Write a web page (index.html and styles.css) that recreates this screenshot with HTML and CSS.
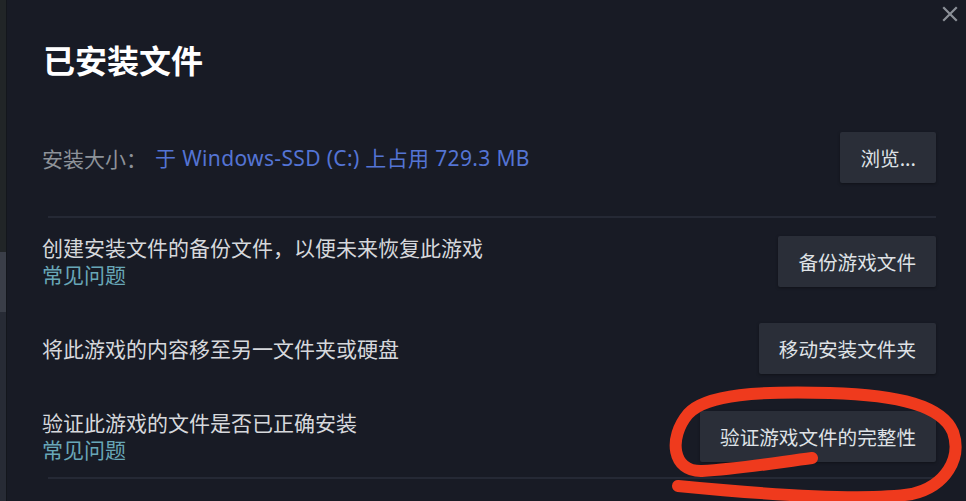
FILE: index.html
```html
<!DOCTYPE html>
<html lang="zh-CN">
<head>
<meta charset="utf-8">
<title>已安装文件</title>
<link rel="stylesheet" href="styles.css">
</head>
<body>
<div class="strip"><div class="s1"></div><div class="s2"></div><div class="s3"></div></div>
<main class="dialog">
  <h1 class="title">已安装文件</h1>
  <section class="row row-size">
    <div class="size"><span class="label">安装大小：</span><span class="value">于 Windows-SSD (C:) 上占用 729.3 MB</span></div>
    <button class="btn">浏览...</button>
  </section>
  <hr class="divider">
  <section class="row">
    <div class="desc"><div>创建安装文件的备份文件，以便未来恢复此游戏</div><a class="link">常见问题</a></div>
    <button class="btn">备份游戏文件</button>
  </section>
  <section class="row gap">
    <div class="desc"><div>将此游戏的内容移至另一文件夹或硬盘</div></div>
    <button class="btn">移动安装文件夹</button>
  </section>
  <section class="row gap">
    <div class="desc"><div>验证此游戏的文件是否已正确安装</div><a class="link">常见问题</a></div>
    <button class="btn">验证游戏文件的完整性</button>
  </section>
  <hr class="divider bottom">
</main>
<button class="close" aria-label="关闭">
  <svg width="16" height="16" viewBox="0 0 16 16"><path d="M2 2 L14 14 M14 2 L2 14" stroke="#8b9097" stroke-width="2.2" stroke-linecap="square" fill="none"/></svg>
</button>
<svg class="scribble" width="966" height="501" viewBox="0 0 966 501">
  <path d="M812 458 C780 462 740 469 702 471 C672 472 668 438 688 414 C706 394 760 391 830 393 C900 395 942 406 953 432 C962 458 946 486 912 494 C862 502 760 494 678 486" fill="none" stroke="#ef3a1d" stroke-width="12" stroke-linecap="round" stroke-linejoin="round"/>
</svg>
</body>
</html>
```
FILE: styles.css
```css
html, body {
  margin: 0;
  height: 501px;
  overflow: hidden;
}
body {
  position: relative;
  display: flex;
  background: #181b25;
  font-family: "Noto Sans", "Noto Sans CJK SC", sans-serif;
  color: #d8dadd;
}
.strip {
  width: 6px;
  display: flex;
  flex-direction: column;
  border-right: 1px solid #13161c;
}
.s1 { height: 252px; background: #212527; }
.s2 { height: 60px; background: #3a3e48; }
.s3 { flex: 1; background: #272b35; }
.dialog {
  flex: 1;
  padding: 43px 30px 0 35px;
}
.title {
  margin: 0;
  padding-left: 1px;
  font-size: 32px;
  line-height: 32px;
  font-weight: 700;
  color: #ffffff;
  font-family: "Noto Sans CJK SC", sans-serif;
}
.row {
  display: flex;
  align-items: center;
  justify-content: space-between;
}
.row-size { margin-top: 57px; }
.gap { margin-top: 35px; }
.size {
  font-size: 21px;
  line-height: 27px;
  display: flex;
  padding-top: 2px;
}
.label {
  color: #8d9299;
  font-family: "Noto Sans CJK SC", sans-serif;
  margin-right: 8px;
}
.value {
  color: #5474d4;
  letter-spacing: 0.35px;
}
.desc {
  font-size: 21px;
  line-height: 27px;
  font-family: "Noto Sans CJK SC", sans-serif;
  color: #d6d8dc;
}
.link {
  display: block;
  color: #68a7b8;
}
.btn {
  height: 51px;
  padding: 0 20px;
  border: none;
  border-radius: 2px;
  background: #2a2e38;
  color: #dfe2e6;
  font-family: "Noto Sans CJK SC", sans-serif;
  font-size: 19.6px;
  box-shadow: 0 1px 3px rgba(0,0,0,0.35);
}
.divider {
  margin: 33px 0 16px 6px;
  border: 0;
  height: 2px;
  background: #252935;
}
.divider.bottom { margin: 14px 0 0 6px; }
.close {
  position: absolute;
  top: 6px;
  right: 8px;
  padding: 0;
  border: none;
  background: none;
  width: 16px;
  height: 16px;
}
.close svg { display: block; }
.scribble {
  position: absolute;
  left: 0;
  top: 0;
  pointer-events: none;
}
```
